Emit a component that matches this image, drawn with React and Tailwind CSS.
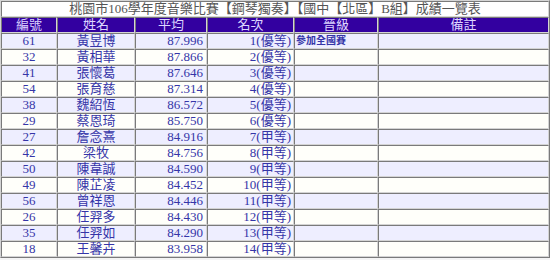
import React from "react";

const rows = [
  ["61", "黃昱博", "87.996", "1(優等)", "參加全國賽"],
  ["32", "黃相華", "87.866", "2(優等)", ""],
  ["41", "張懷葛", "87.646", "3(優等)", ""],
  ["54", "張育慈", "87.314", "4(優等)", ""],
  ["38", "魏紹恆", "86.572", "5(優等)", ""],
  ["29", "蔡恩琦", "85.750", "6(優等)", ""],
  ["27", "詹念熹", "84.916", "7(甲等)", ""],
  ["42", "梁牧", "84.756", "8(甲等)", ""],
  ["50", "陳韋誠", "84.590", "9(甲等)", ""],
  ["49", "陳芷凌", "84.452", "10(甲等)", ""],
  ["56", "曾祥恩", "84.446", "11(甲等)", ""],
  ["26", "任羿多", "84.430", "12(甲等)", ""],
  ["35", "任羿如", "84.290", "13(甲等)", ""],
  ["18", "王馨卉", "83.958", "14(甲等)", ""],
];

const cell =
  "border border-t-[#7a7a7a] border-l-[#7a7a7a] border-b-[#d4d4d4] border-r-[#d4d4d4] h-[16px] p-0 leading-[14px]";

export default function App() {
  return (
    <div
      className="w-[550px] h-[260px] overflow-hidden bg-[#f4f4f4] text-[13px]"
      style={{ fontFamily: '"Liberation Serif", "Noto Sans CJK TC", serif' }}
    >
      <table className="w-[550px] table-fixed border-separate border-spacing-0 border border-t-[#d4d4d4] border-l-[#d4d4d4] border-b-[#7a7a7a] border-r-[#7a7a7a] bg-white">
        <colgroup>
          <col className="w-[56px]" />
          <col className="w-[78px]" />
          <col className="w-[72px]" />
          <col className="w-[87px]" />
          <col className="w-[84px]" />
          <col />
        </colgroup>
        <tbody>
          <tr>
            <td colSpan={6} className={`${cell} text-center text-[#555555] bg-white`}>
              桃園市106學年度音樂比賽【鋼琴獨奏】【國中【北區】B組】成績一覽表
            </td>
          </tr>
          <tr className="bg-[#3300a0] text-[#ddd6ff]">
            {["編號", "姓名", "平均", "名次", "晉級", "備註"].map((h) => (
              <td key={h} className={`${cell} text-center`}>
                {h}
              </td>
            ))}
          </tr>
          {rows.map((r, i) => (
            <tr
              key={r[0]}
              className={`${i % 2 === 0 ? "bg-[#eeeeff]" : "bg-[#fffffa]"} text-[#3535a8]`}
            >
              <td className={`${cell} text-center`}>{r[0]}</td>
              <td className={`${cell} text-center`}>{r[1]}</td>
              <td className={`${cell} text-right pr-[3px]`}>{r[2]}</td>
              <td className={`${cell} text-right pr-[2px]`}>{r[3]}</td>
              <td className={`${cell} text-left pl-[1px] text-[10px] font-bold`}>{r[4]}</td>
              <td className={cell}></td>
            </tr>
          ))}
        </tbody>
      </table>
    </div>
  );
}
